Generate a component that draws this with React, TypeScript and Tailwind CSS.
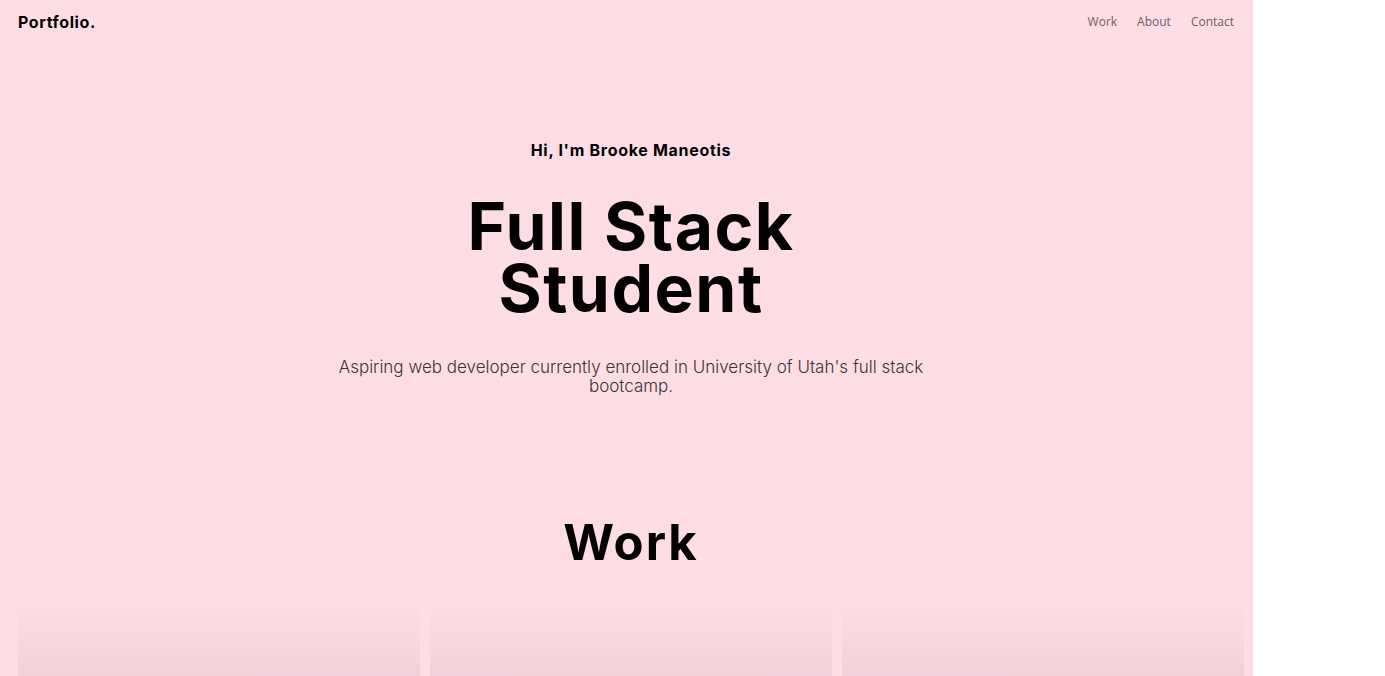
import React from "react";

const projects = [{ id: 1 }, { id: 2 }, { id: 3 }];

const App = () => {
  return (
    <div className="w-[1253px] min-h-screen bg-[#fedde5] font-['Inter',sans-serif] text-black">
      <nav className="flex items-center justify-between pl-[18px] pr-[19px] h-[44px]">
        <a href="#" className="text-[16px] font-bold tracking-[0.6px]">
          Portfolio.
        </a>
        <ul className="flex gap-5 font-['Open_Sans',sans-serif] text-[12px] text-[#6e6065]">
          <li>Work</li>
          <li>About</li>
          <li>Contact</li>
        </ul>
      </nav>

      <section className="flex flex-col items-center pl-[18px] pr-[9px] pt-[95px]">
        <h3 className="text-[16px] font-bold leading-[22px] tracking-[0.7px]">
          Hi, I'm Brooke Maneotis
        </h3>
        <h1 className="mt-[34px] text-[66px] font-bold leading-[62px] tracking-[1.5px] text-center">
          Full Stack
          <br />
          Student
        </h1>
        <p className="mt-[39px] max-w-[600px] text-center text-[17px] font-light leading-[19px] text-[#3b3538]">
          Aspiring web developer currently enrolled in University of Utah's full stack bootcamp.
        </p>
      </section>

      <section id="work" className="pl-[18px] pr-[9px] pt-[117px]">
        <h2 className="text-center text-[49px] font-bold leading-[60px] tracking-[2px]">Work</h2>
        <div className="mt-[31px] grid grid-cols-3 gap-[10px]">
          {projects.map((p) => (
            <div
              key={p.id}
              className="h-[300px] bg-gradient-to-b from-[#fedde5] via-[#efd2d9] via-[25%] to-[#efd2d9]"
            />
          ))}
        </div>
      </section>
    </div>
  );
};

export default App;
